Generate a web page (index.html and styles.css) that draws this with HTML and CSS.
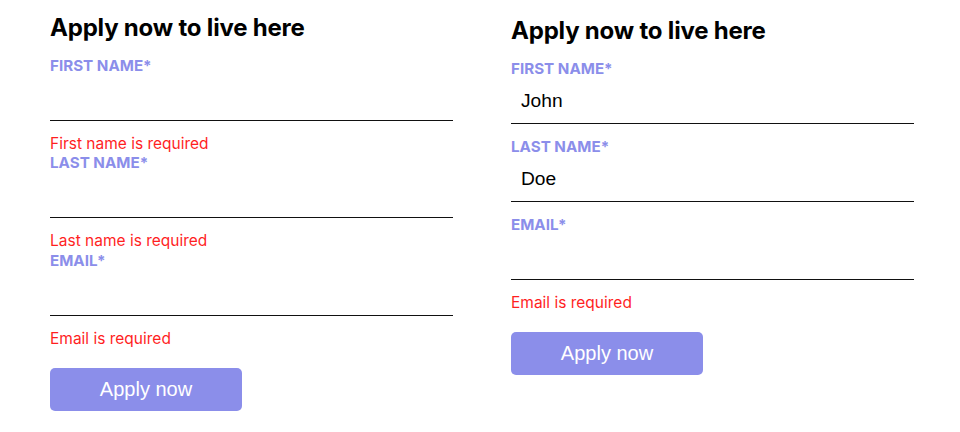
FILE: index.html
```html
<!DOCTYPE html>
<html lang="en">
<head>
<meta charset="utf-8">
<title>Apply now</title>
<link rel="stylesheet" href="styles.css">
</head>
<body>
<div class="page">
  <form class="apply-form">
    <h2 class="form-title">Apply now to live here</h2>
    <div class="field">
      <label class="field-label">FIRST NAME*</label>
      <input class="field-input" type="text" value="">
      <div class="field-error">First name is required</div>
    </div>
    <div class="field">
      <label class="field-label">LAST NAME*</label>
      <input class="field-input" type="text" value="">
      <div class="field-error">Last name is required</div>
    </div>
    <div class="field">
      <label class="field-label">EMAIL*</label>
      <input class="field-input" type="email" value="">
      <div class="field-error">Email is required</div>
    </div>
    <button class="submit-btn" type="button">Apply now</button>
  </form>

  <form class="apply-form apply-form--shifted">
    <h2 class="form-title">Apply now to live here</h2>
    <div class="field">
      <label class="field-label">FIRST NAME*</label>
      <input class="field-input" type="text" value="John">
    </div>
    <div class="field">
      <label class="field-label">LAST NAME*</label>
      <input class="field-input" type="text" value="Doe">
    </div>
    <div class="field">
      <label class="field-label">EMAIL*</label>
      <input class="field-input" type="email" value="">
      <div class="field-error">Email is required</div>
    </div>
    <button class="submit-btn" type="button">Apply now</button>
  </form>
</div>
</body>
</html>
```
FILE: styles.css
```css
html, body {
  margin: 0;
  padding: 0;
  background: #ffffff;
}

body {
  font-family: Inter, "Noto Sans", sans-serif;
  color: #000;
}

.page {
  display: grid;
  grid-template-columns: 403px 403px;
  column-gap: 58px;
  padding: 14px 0 0 50px;
  align-items: start;
}

.apply-form {
  display: flex;
  flex-direction: column;
  align-items: stretch;
  margin: 0;
}

.apply-form--shifted {
  padding-top: 3px;
}

.form-title {
  margin: 0 0 14px 0;
  font-size: 24px;
  line-height: 28px;
  font-weight: 700;
  letter-spacing: -0.2px;
  color: #000;
}

.field {
  display: flex;
  flex-direction: column;
}

.field-label {
  font-size: 15.2px;
  line-height: 20px;
  font-weight: 700;
  color: #8b8eea;
}

.field-input {
  display: block;
  box-sizing: border-box;
  width: 100%;
  height: 45px;
  margin: 0 0 13px 0;
  padding: 0 10px;
  border: none;
  border-bottom: 1px solid #111;
  background: transparent;
  font-family: "Liberation Sans", Arial, sans-serif;
  font-size: 19.2px;
  color: #000;
  outline: none;
}

.field-error {
  font-size: 15.5px;
  line-height: 19.35px;
  color: #ff1f1f;
}

.submit-btn {
  margin-top: 20px;
  align-self: flex-start;
  width: 192px;
  height: 43px;
  border: none;
  border-radius: 5px;
  background: #8b8eea;
  color: #fff;
  font-family: "Liberation Sans", Arial, sans-serif;
  font-size: 20px;
  cursor: pointer;
}
```
